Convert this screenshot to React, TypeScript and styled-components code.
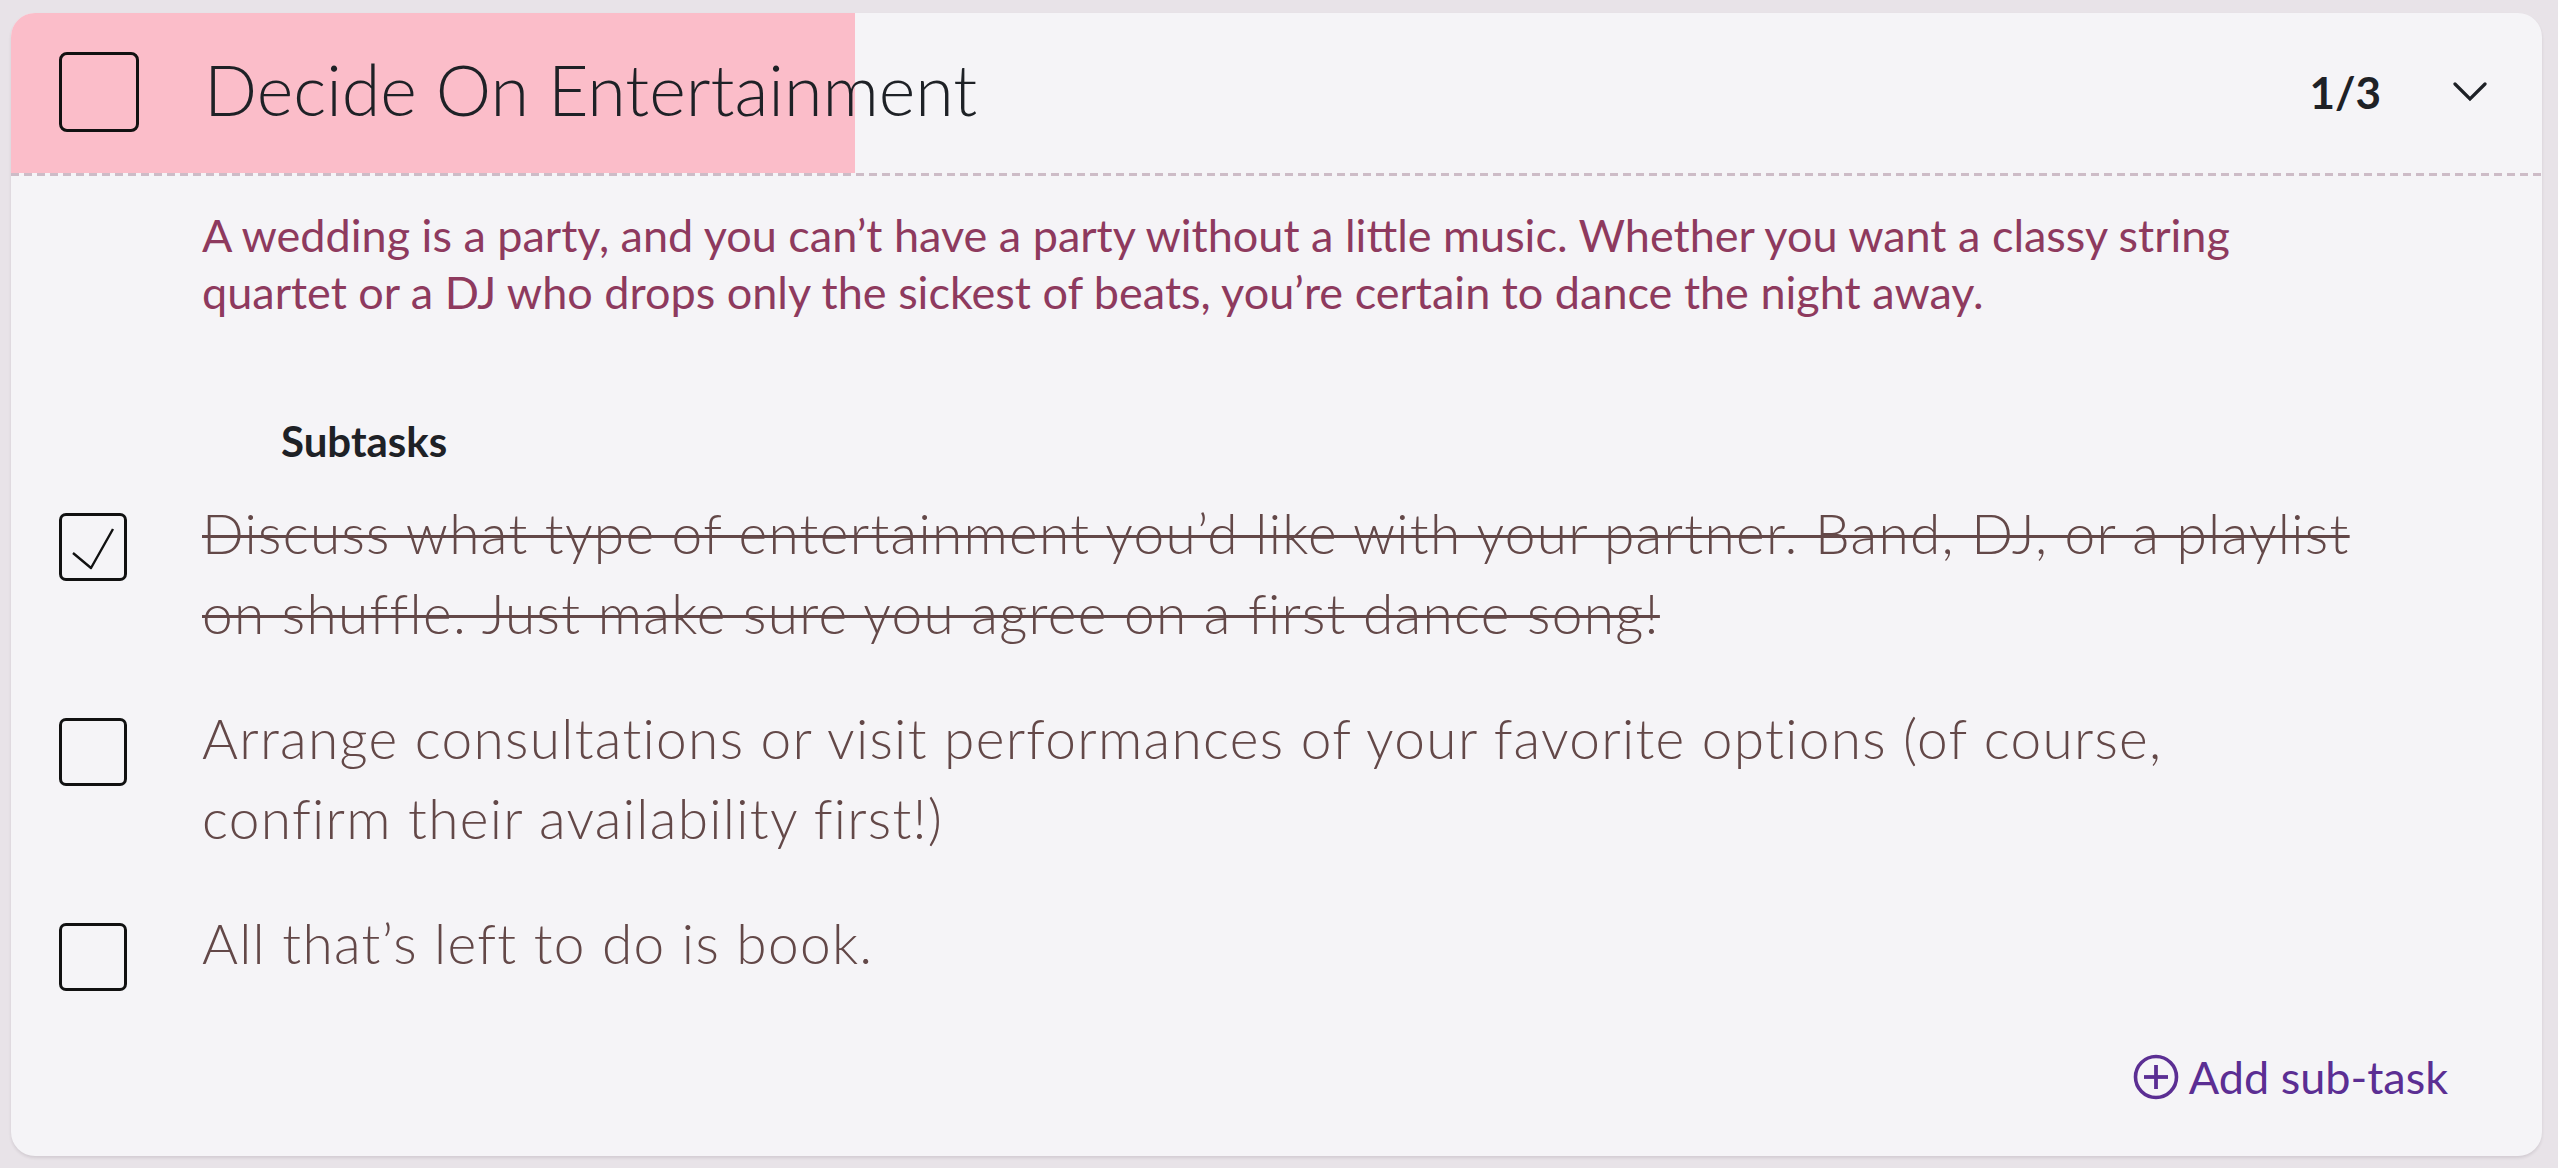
import React, { useState } from 'react';
import styled, { createGlobalStyle } from 'styled-components';

const GlobalStyle = createGlobalStyle`
  html, body {
    margin: 0;
    padding: 0;
    background: #e8e3e8;
  }
  * {
    box-sizing: border-box;
  }
`;

const Page = styled.div`
  padding: 13px 16px 13px 11px;
  font-family: Lato, 'Open Sans', sans-serif;
`;

const Card = styled.section`
  background: #f5f4f7;
  border-radius: 24px;
  overflow: hidden;
  box-shadow: 0 2px 3px rgba(60, 40, 60, 0.12);
`;

const Header = styled.header<{ $progress: number }>`
  display: flex;
  align-items: center;
  height: 163px;
  padding: 0 55px 6px 48px;
  background:
    repeating-linear-gradient(to right, #cdbcc7 0 8px, transparent 8px 13px) left bottom / 100% 3px no-repeat,
    linear-gradient(
      to right,
      #fbbdc9 ${(p) => p.$progress}%,
      transparent ${(p) => p.$progress}%
    ) left top / 100% calc(100% - 3px) no-repeat;
`;

const Box = styled.button<{ $size: number }>`
  flex: none;
  width: ${(p) => p.$size}px;
  height: ${(p) => p.$size}px;
  padding: 0;
  border: 3px solid #111;
  border-radius: 8px;
  background: transparent;
  display: flex;
  align-items: center;
  justify-content: center;
  cursor: pointer;
`;

const Title = styled.h2`
  flex: 1;
  margin: 0 0 6px 65px;
  font-size: 70px;
  font-weight: 300;
  color: #1e2126;
`;

const Count = styled.span`
  font-size: 44px;
  font-weight: 700;
  color: #1e2126;
`;

const Chevron = styled.button`
  margin-left: 72px;
  padding: 0;
  border: none;
  background: none;
  display: flex;
  cursor: pointer;
`;

const Body = styled.div`
  padding: 31px 222px 0 191px;
`;

const Description = styled.p`
  margin: 0;
  font-size: 45px;
  line-height: 57px;
  color: #8e3a5e;
`;

const SubtasksLabel = styled.h3`
  margin: 96px 0 0 79px;
  font-size: 42px;
  line-height: 48px;
  font-weight: 700;
  color: #1e2126;
`;

const List = styled.ul`
  list-style: none;
  margin: 28px 0 0;
  padding: 0 183px 0 48px;
  display: flex;
  flex-direction: column;
  gap: 45px;
`;

const Row = styled.li`
  display: flex;
  align-items: flex-start;
  gap: 75px;
`;

const RowText = styled.span<{ $done: boolean }>`
  font-size: 55px;
  line-height: 80px;
  font-weight: 300;
  letter-spacing: 1.3px;
  color: #634848;
  text-decoration: ${(p) => (p.$done ? 'line-through' : 'none')};
  text-decoration-thickness: 3px;
`;

const RowBox = styled(Box)`
  margin-top: 20px;
  border-radius: 7px;
`;

const Footer = styled.div`
  display: flex;
  justify-content: flex-end;
  padding: 59px 94px 52px 0;
`;

const AddButton = styled.button`
  display: flex;
  align-items: center;
  gap: 10px;
  padding: 0;
  border: none;
  background: none;
  font-family: inherit;
  font-size: 45px;
  color: #5b2e93;
  cursor: pointer;
`;

const CheckMark = () => (
  <svg width="60" height="60" viewBox="0 0 60 60" fill="none">
    <polyline points="10,36 28,51 50,12" stroke="#111" strokeWidth="2.4" strokeLinejoin="round" />
  </svg>
);

const ChevronIcon = () => (
  <svg width="34" height="20" viewBox="0 0 34 20" fill="none">
    <polyline points="2,2 17,17 32,2" stroke="#1e2126" strokeWidth="3.2" strokeLinecap="round" />
  </svg>
);

const PlusCircle = () => (
  <svg width="46" height="46" viewBox="0 0 46 46" fill="none">
    <circle cx="23" cy="23" r="20.5" stroke="#5b2e93" strokeWidth="3.6" />
    <line x1="23" y1="11" x2="23" y2="35" stroke="#5b2e93" strokeWidth="3.8" />
    <line x1="11" y1="23" x2="35" y2="23" stroke="#5b2e93" strokeWidth="3.8" />
  </svg>
);

const initial = [
  {
    text: 'Discuss what type of entertainment you’d like with your partner. Band, DJ, or a playlist on shuffle. Just make sure you agree on a first dance song!',
    done: true,
  },
  {
    text: 'Arrange consultations or visit performances of your favorite options (of course, confirm their availability first!)',
    done: false,
  },
  { text: 'All that’s left to do is book.', done: false },
];

export default function App() {
  const [tasks, setTasks] = useState(initial);
  const doneCount = tasks.filter((t) => t.done).length;

  const toggle = (i: number) =>
    setTasks((prev) => prev.map((t, j) => (j === i ? { ...t, done: !t.done } : t)));

  return (
    <>
      <GlobalStyle />
      <Page>
        <Card>
          <Header $progress={(doneCount / tasks.length) * 100}>
            <Box $size={80} aria-label="Complete task" />
            <Title>Decide On Entertainment</Title>
            <Count>
              {doneCount}/{tasks.length}
            </Count>
            <Chevron aria-label="Collapse">
              <ChevronIcon />
            </Chevron>
          </Header>
          <Body>
            <Description>
              A wedding is a party, and you can’t have a party without a little music. Whether you
              want a classy string quartet or a DJ who drops only the sickest of beats, you’re
              certain to dance the night away.
            </Description>
            <SubtasksLabel>Subtasks</SubtasksLabel>
          </Body>
          <List>
            {tasks.map((t, i) => (
              <Row key={i}>
                <RowBox $size={68} onClick={() => toggle(i)}>
                  {t.done && <CheckMark />}
                </RowBox>
                <RowText $done={t.done}>{t.text}</RowText>
              </Row>
            ))}
          </List>
          <Footer>
            <AddButton>
              <PlusCircle />
              Add sub-task
            </AddButton>
          </Footer>
        </Card>
      </Page>
    </>
  );
}
